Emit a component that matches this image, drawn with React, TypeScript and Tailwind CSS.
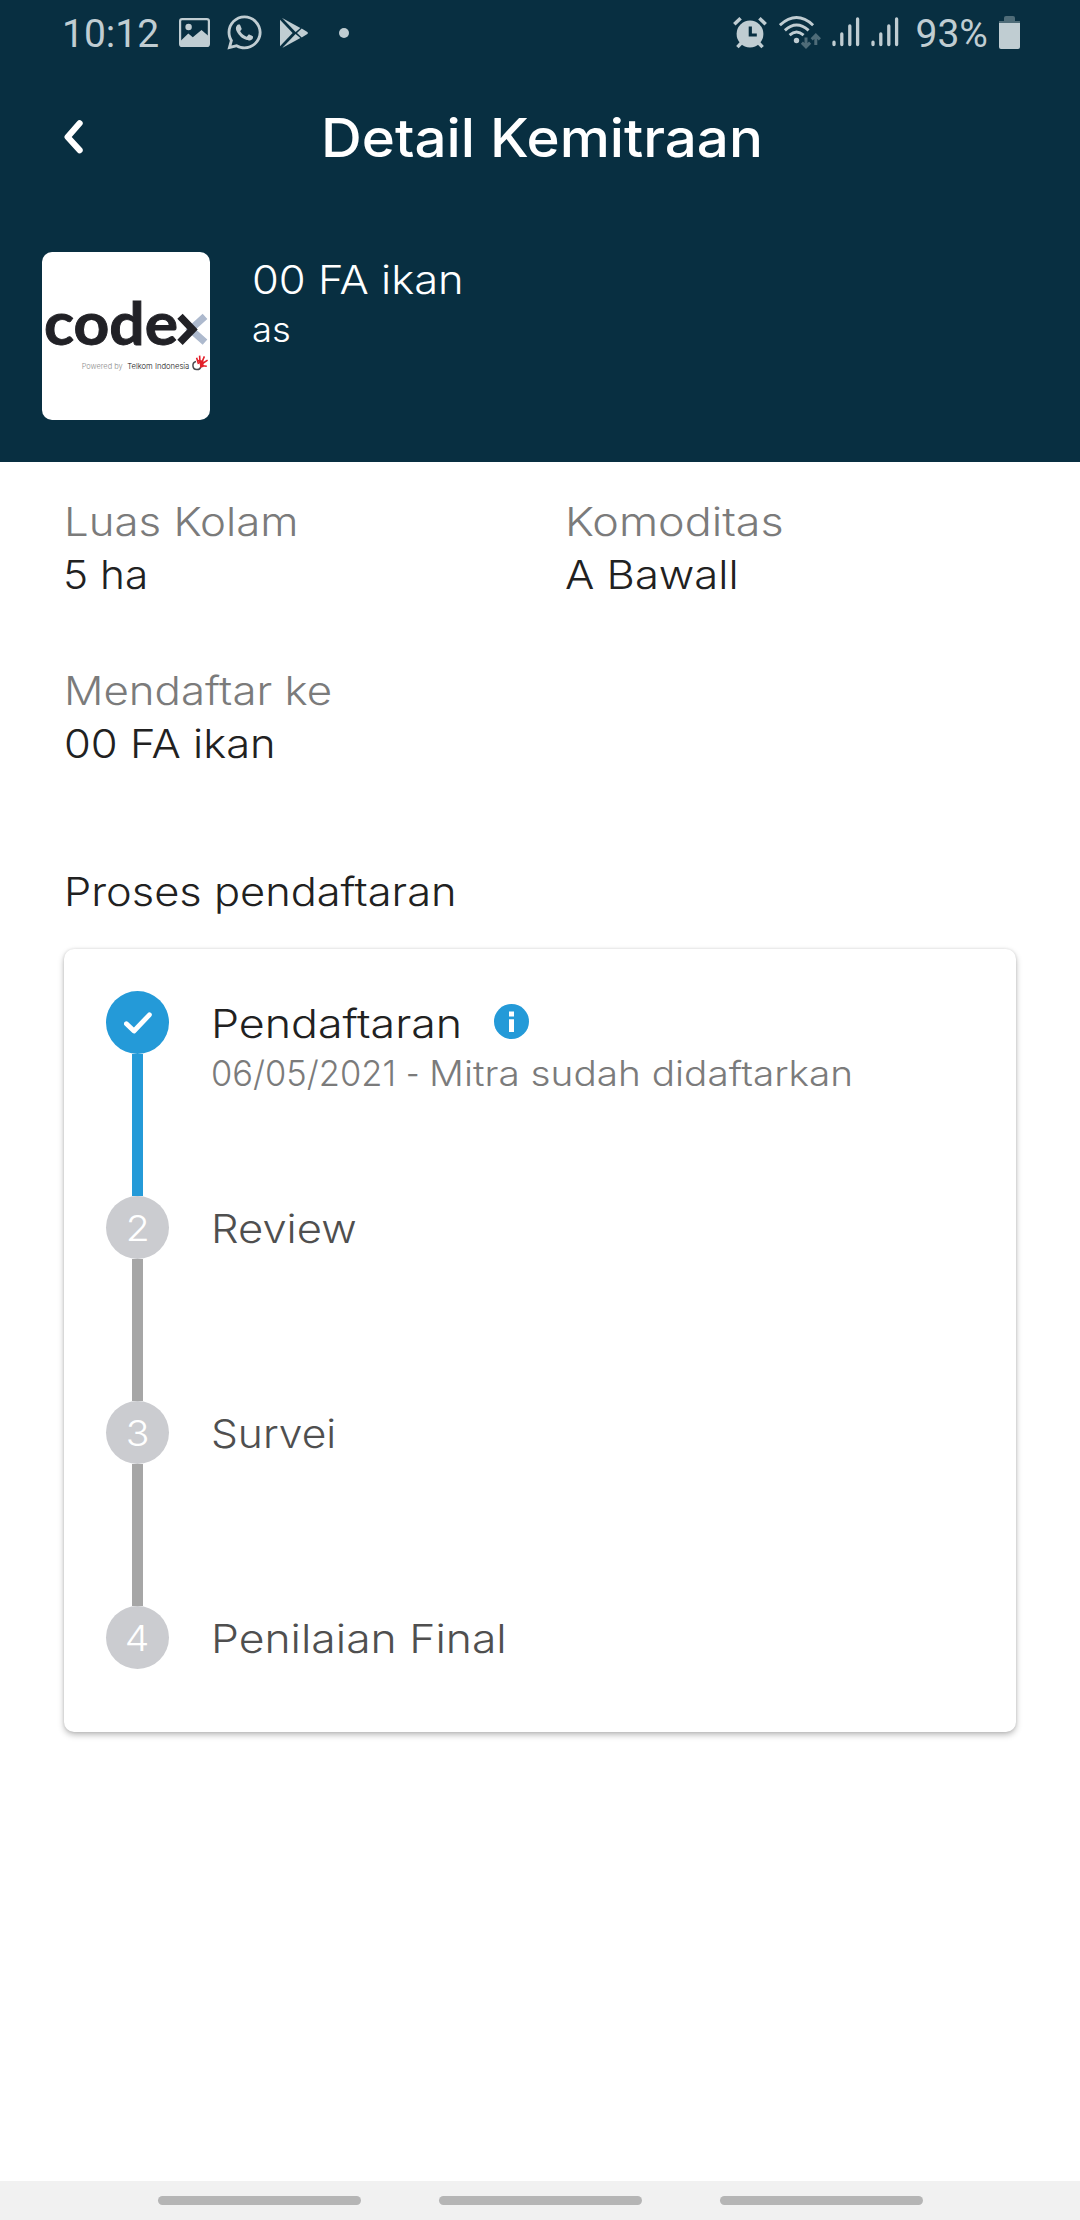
import type { ReactNode } from "react";
import clsx from "clsx";
import { FaWhatsapp } from "react-icons/fa";

function Text({ className, children }: { className?: string; children: ReactNode }) {
  return (
    <span className={clsx("block w-max origin-left whitespace-nowrap", className)}>{children}</span>
  );
}

function ImageIcon() {
  return (
    <svg width="31" height="29" viewBox="0 0 31 29" fill="none">
      <rect x="1.1" y="1.1" width="28.8" height="26.8" rx="2" stroke="currentColor" strokeWidth="2.2" />
      <circle cx="9.6" cy="9" r="3.2" fill="currentColor" />
      <path d="M2 22.5 9.3 15.6 13.8 19.3 22.5 12 29.5 18V28H2Z" fill="currentColor" />
    </svg>
  );
}

function PlayIcon() {
  return (
    <svg width="28" height="30" viewBox="0 0 28 30" fill="currentColor">
      <path d="M0 1.8 12.6 15 0 28.2Z" />
      <path d="M2.6 0.2 20.4 10 15.6 14 2.6 0.6Z" />
      <path d="M2.6 29.8 20.4 20 15.6 16 2.6 29.4Z" />
      <path d="M21.7 10.6 27.4 14.1Q28.4 15 27.4 15.9L21.7 19.4 17 15Z" />
    </svg>
  );
}

function AlarmIcon() {
  return (
    <svg width="34" height="32" viewBox="0 0 34 32" fill="none" stroke="currentColor">
      <circle cx="17" cy="17" r="13.4" fill="currentColor" stroke="none" />
      <path d="M1.3 7.2 7.6 1.3M32.7 7.2 26.4 1.3" strokeWidth="3.6" />
      <path d="M8.3 26 4.4 30.2M25.7 26 29.6 30.2" strokeWidth="3.4" />
      <path d="M17.3 9.5V18H23.8" stroke="#082f41" strokeWidth="3.2" />
    </svg>
  );
}

function WifiIcon() {
  return (
    <svg width="42" height="33" viewBox="0 0 42 33" fill="none" stroke="currentColor">
      <path d="M0.9 9.2Q17.5 -6 34.1 9.2M5.9 14.4Q17.5 3.6 29.6 14.4M10.6 19.2Q17.5 13 24.6 19.2" strokeWidth="2.9" />
      <circle cx="17.5" cy="24.5" r="2.7" fill="currentColor" stroke="none" />
      <path d="M27 21.5V30M22.9 26.6 27 30.8 31.1 26.6M36.8 29V20.5M32.7 23.4 36.8 19.2 40.9 23.4" stroke="#4f6c78" strokeWidth="3" />
    </svg>
  );
}

function SignalIcon() {
  return (
    <svg width="28" height="30" viewBox="0 0 28 30" stroke="currentColor" strokeWidth="3.3" strokeLinecap="round">
      <path d="M2 25.2V27.6M9.8 17V27.6M17.8 9V27.6M25.6 2V27.6" />
    </svg>
  );
}

function StatusBar() {
  return (
    <div className="flex h-[68px] items-center pl-[62px] font-['Roboto'] text-[39px] leading-[68px] text-[#c0cdd2]">
      <div className="w-[116.5px]">
        <Text>10:12</Text>
      </div>
      <div className="-mt-[3px]">
        <ImageIcon />
      </div>
      <FaWhatsapp className="-mt-[3px] ml-[15px] size-[39px]" />
      <div className="-mt-[3px] ml-4">
        <PlayIcon />
      </div>
      <div className="-mt-[3px] ml-[31px] size-[10px] rounded-full bg-[#c0cdd2]" />
      <div className="-mt-[3px] ml-[384px]">
        <AlarmIcon />
      </div>
      <div className="-mt-1 ml-[12px]">
        <WifiIcon />
      </div>
      <div className="-mt-1 ml-[11px]">
        <SignalIcon />
      </div>
      <div className="-mt-1 ml-[11px]">
        <SignalIcon />
      </div>
      <div className="ml-[17px] w-[83px]">
        <Text>93%</Text>
      </div>
      <div className="-mt-[3px] flex w-[21px] flex-col items-center">
        <div className="h-[5px] w-[11px] rounded-t-xs bg-[#4f6c78]" />
        <div className="h-0.5 w-full bg-[#4f6c78]" />
        <div className="h-[26px] w-full rounded-b-xs bg-[#c0cdd2]" />
      </div>
    </div>
  );
}

function CodexLogo() {
  return (
    <svg width="168" height="168" viewBox="0 0 168 168" fill="none" className="font-['Inter']">
      <text x="2" y="93" fontFamily="Lato" fontSize="59" fontWeight="700" fill="#212126" stroke="#212126" strokeWidth="0.9" textLength="134" lengthAdjust="spacingAndGlyphs">
        code
      </text>
      <path d="M163 64.4 148.6 77.4 163 90.2" stroke="#adb9cd" strokeWidth="7" />
      <path d="M138 64.2 150.6 77.4 138 90.4" stroke="#212126" strokeWidth="7.4" />
      <text x="39.7" y="116.7" fontSize="7.8" fill="#8b8b8b" textLength="41" lengthAdjust="spacingAndGlyphs">
        Powered by
      </text>
      <text x="85.3" y="116.7" fontSize="7.8" fill="#111" textLength="62" lengthAdjust="spacingAndGlyphs">
        Telkom Indonesia
      </text>
      <path d="M154 109.5A4.1 4.1 0 1 0 159 114.5" stroke="#4a4a4f" strokeWidth="1.5" />
      <path d="M156.5 112 154.6 105.8M158 110 157.6 103.6M160 110 162.4 104.4M160.5 111.5 165.6 108.2M160.5 113.8 164.8 114.2" stroke="#e3202a" strokeWidth="1.6" />
      <path d="M154.8 107.6 161.5 108.8 161.6 115 157.8 115.8Q159 112.4 154.8 107.6Z" fill="#e3202a" />
    </svg>
  );
}

function Field({ label, children }: { label: ReactNode; children: ReactNode }) {
  return (
    <div className="text-[39px] leading-[53px] font-light">
      <div className="text-[#7b7b7b]">{label}</div>
      <div className="text-[#212121]">{children}</div>
    </div>
  );
}

function Step({ badge, line, children }: { badge: ReactNode; line?: string; children: ReactNode }) {
  return (
    <div className="flex h-[205px] gap-[42px]">
      <div className="flex w-[63px] flex-col items-center">
        {badge}
        {line && <div className={clsx("w-[11px] grow", line)} />}
      </div>
      <div className="pt-2 text-[39px] leading-[50px] font-light text-[#4f4f4f]">{children}</div>
    </div>
  );
}

function NumberBadge({ children }: { children: ReactNode }) {
  return (
    <div className="flex h-[63px] w-[63px] shrink-0 justify-center rounded-full bg-[#cbccd0] text-[35px] leading-[65px] font-light text-white">
      <span className="scale-x-[1.118]">{children}</span>
    </div>
  );
}

export default function App() {
  return (
    <div className="flex h-[2220px] w-[1080px] flex-col overflow-hidden bg-white font-['Inter',sans-serif]">
      <header className="h-[462px] bg-[#082f41] text-white">
        <StatusBar />
        <div className="flex h-[140px] items-center pl-[63px]">
          <svg width="20" height="34" viewBox="0 0 20 34" fill="none" className="-mt-[3px]">
            <path d="M16.6 3.3 4.6 17 16.6 30.2" stroke="currentColor" strokeWidth="6.2" strokeLinecap="round" strokeLinejoin="round" />
          </svg>
          <Text className="ml-[238px] scale-x-[1.065] text-[53px] leading-[140px] font-medium">Detail Kemitraan</Text>
        </div>
        <div className="flex gap-[42px] px-[42px] pt-[44px] font-light">
          <div className="size-[168px] overflow-hidden rounded-[10px] bg-white">
            <CodexLogo />
          </div>
          <div className="pt-[3px]">
            <Text className="scale-x-[1.115] text-[39px] leading-[50px]">00 FA ikan</Text>
            <Text className="scale-x-[1.04] text-[35px] leading-[48px]">as</Text>
          </div>
        </div>
      </header>

      <main className="px-[64px] pt-[33px]">
        <div className="grid grid-cols-[501px_1fr] gap-y-[63px]">
          <Field label={<Text className="scale-x-[1.123]">Luas Kolam</Text>}>
            <Text className="-ml-px scale-x-[1.085]">5 ha</Text>
          </Field>
          <Field label={<Text className="scale-x-[1.151]">Komoditas</Text>}>
            <Text className="scale-x-[1.117]">A Bawall</Text>
          </Field>
          <Field label={<Text className="scale-x-[1.123]">Mendaftar ke</Text>}>
            <Text className="scale-x-[1.115]">00 FA ikan</Text>
          </Field>
        </div>

        <h2 className="mt-[95px] text-[39px] leading-[53px] font-light text-[#212121]">
          <Text className="scale-x-[1.112]">Proses pendaftaran</Text>
        </h2>

        <section className="mt-[31px] h-[783px] rounded-[10px] bg-white px-[42px] pt-[42px] shadow-[0_3px_6px_rgba(0,0,0,0.26),0_0_3px_rgba(0,0,0,0.12)]">
          <Step
            line="bg-[#249ad8]"
            badge={
              <div className="flex size-[63px] shrink-0 items-center justify-center rounded-full bg-[#249ad8]">
                <svg width="28" height="22" viewBox="0 0 28 22" fill="none">
                  <path d="M2.4 11.7 10 19 25.4 2.8" stroke="#fff" strokeWidth="4.8" strokeLinecap="round" strokeLinejoin="round" />
                </svg>
              </div>
            }
          >
            <div className="flex h-[50px] items-center text-[#212121]">
              <div className="w-[283px]">
                <Text className="scale-x-[1.147]">Pendaftaran</Text>
              </div>
              <svg width="35" height="35" viewBox="0 0 35 35" className="-mt-[5px]">
                <circle cx="17.5" cy="17.5" r="17.5" fill="#249ad8" />
                <path d="M15 7.5H20V12.5H15ZM15 15.2H20V28H15Z" fill="#fff" />
              </svg>
            </div>
            <div className="flex text-[35px] leading-[48px] text-[#7b7b7b]">
              <div className="w-[195px]">
                <Text className="scale-x-[0.985]">06/05/2021</Text>
              </div>
              <div className="w-[23px]">
                <Text className="scale-x-[0.85]">-</Text>
              </div>
              <Text className="scale-x-[1.107]">Mitra sudah didaftarkan</Text>
            </div>
          </Step>
          <Step line="bg-[#a6a6a6]" badge={<NumberBadge>2</NumberBadge>}>
            <Text className="scale-x-[1.116]">Review</Text>
          </Step>
          <Step line="bg-[#a6a6a6]" badge={<NumberBadge>3</NumberBadge>}>
            <Text className="scale-x-[1.09]">Survei</Text>
          </Step>
          <Step badge={<NumberBadge>4</NumberBadge>}>
            <Text className="scale-x-[1.14]">Penilaian Final</Text>
          </Step>
        </section>
      </main>

      <nav className="mt-auto flex h-[39px] items-center justify-center gap-[78px] bg-[#f1f1f1]">
        <div className="h-[9px] w-[203px] rounded-full bg-[#b5b5b5]" />
        <div className="h-[9px] w-[203px] rounded-full bg-[#b5b5b5]" />
        <div className="h-[9px] w-[203px] rounded-full bg-[#b5b5b5]" />
      </nav>
    </div>
  );
}
